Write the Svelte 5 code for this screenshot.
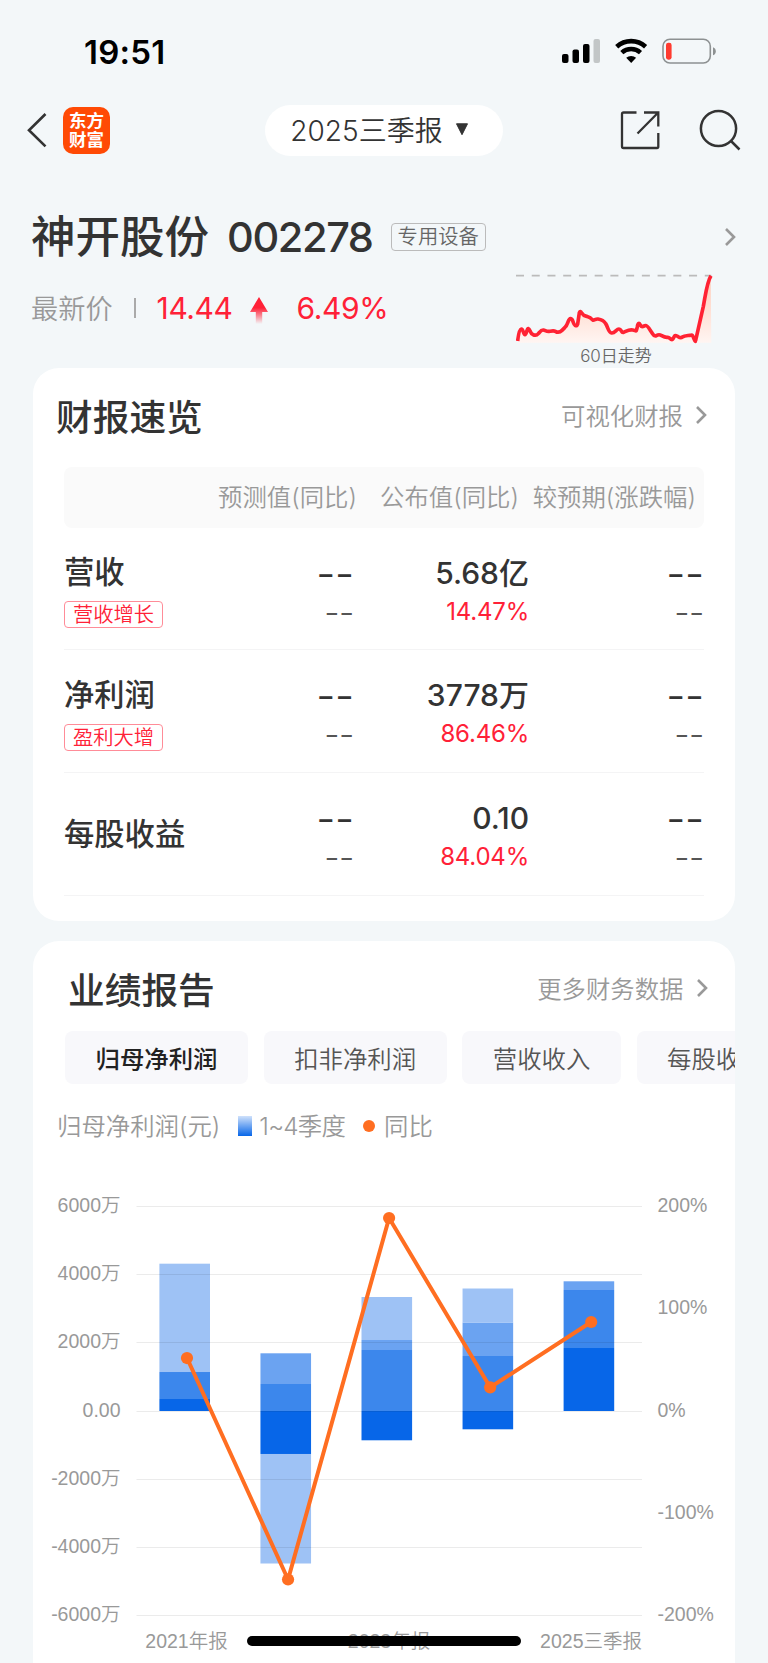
<script>
	const metrics = [
		{ name: '营收', tag: '营收增长', value: '5.68亿', change: '14.47%' },
		{ name: '净利润', tag: '盈利大增', value: '3778万', change: '86.46%' },
		{ name: '每股收益', tag: '', value: '0.10', change: '84.04%' }
	];

	const tabs = ['归母净利润', '扣非净利润', '营收收入', '每股收益'];
	let activeTab = $state(0);

	// Stacked quarters, from/to in 万元
	const colors = ['#0766e8', '#3c87ec', '#6ba3f1', '#9ec2f5'];
	const bars = [
		[[0, 351, 0], [351, 1142, 1], [1142, 4315, 3]],
		[[0, 791, 1], [791, 1690, 2], [-1259, 0, 0], [-4467, -1259, 3]],
		[[0, 1787, 1], [1787, 2080, 2], [2080, 3339, 3], [-858, 0, 0]],
		[[0, 1611, 1], [1611, 2592, 2], [2592, 3588, 3], [-536, 0, 0]],
		[[0, 1845, 0], [1845, 3544, 1], [3544, 3799, 2]]
	];
	const growth = [51.7, -164.5, 188.4, 23.1, 86.9];

	const leftTicks = [6000, 4000, 2000, 0, -2000, -4000, -6000];
	const rightTicks = [200, 100, 0, -100, -200];

	const barWidth = 50.6;
	const barX = (i) => 126.4 + i * 101.05;
	const valueY = (v) => 261 - v * 0.03414;
	const percentY = (p) => 261 - p * 1.0243;
	const pointX = (i) => 154 + i * 101.05;

	const linePoints = growth.map((p, i) => `${pointX(i)},${percentY(p)}`).join(' ');
</script>

{#snippet chevron()}
	<svg class="chevron" width="12" height="20" viewBox="0 0 12 20">
		<path d="M2 2l8 8-8 8" />
	</svg>
{/snippet}

<div class="page">
	<div class="status-bar">
		<span class="time">19:51</span>
		<svg class="status-icons" width="156" height="28" viewBox="0 0 156 28">
			<rect x="1" y="16" width="6.5" height="9" rx="2" />
			<rect x="11.5" y="11.5" width="6.5" height="13.5" rx="2" />
			<rect x="22" y="6" width="6.5" height="19" rx="2" />
			<rect x="32.5" y="1" width="6.5" height="24" rx="2" fill="#c2c6c7" />
			<g fill="none" stroke="#000" stroke-width="4.6">
				<path d="M55.7 8.7a21.5 21.5 0 0 1 28.9 0" />
				<path d="M60.8 14.6a14 14 0 0 1 18.7 0" />
			</g>
			<path d="M65.2 19.8a7.5 7.5 0 0 1 9.9 0l-4.9 5.2z" />
			<rect x="102" y="1.2" width="47.3" height="23.8" rx="7" fill="none" stroke="#8d9192" stroke-width="1.6" />
			<rect x="105" y="4.7" width="5.6" height="17" rx="2.4" fill="#ff3b30" />
			<path d="M152 9.2q2.8 1 2.8 4t-2.8 4z" fill="#8d9192" />
		</svg>
	</div>

	<header>
		<div class="nav-left">
			<svg width="24" height="40" viewBox="0 0 24 40">
				<path d="M20.5 4L4 20.2l16.5 16.2" fill="none" stroke="#333" stroke-width="2.6" />
			</svg>
			<div class="logo"><span>东方</span><span>财富</span></div>
		</div>

		<button class="period">
			<span>2025三季报</span>
			<svg width="14" height="13" viewBox="0 0 14 13">
				<path d="M1.5.8h11L7 11.7z" fill="#333" stroke="#333" stroke-linejoin="round" />
			</svg>
		</button>

		<div class="nav-right">
			<svg width="40" height="40" viewBox="0 0 40 40">
				<g fill="none" stroke="#333" stroke-width="2.3">
					<path d="M16.5 2.500H3.500Q2 2.500 2 4V36.500Q2 38 3.500 38H37Q38.300 38 38.300 36.500V23" />
					<path d="M24 2.500h14.300v14M38 2.800L17.500 23.500" />
				</g>
			</svg>
			<svg width="44" height="44" viewBox="0 0 44 44">
				<g fill="none" stroke="#333" stroke-width="2.5">
					<circle cx="20.500" cy="20.500" r="17.600" />
					<path d="M33 33l8.500 8.500" />
				</g>
			</svg>
		</div>
	</header>

	<section class="stock">
		<div class="stock-title">
			<h1>神开股份</h1>
			<span class="code">002278</span>
			<span class="industry">专用设备</span>
			{@render chevron()}
		</div>
		<div class="quote">
			<span class="quote-label">最新价</span>
			<span class="bar"></span>
			<span class="price">14.44</span>
			<svg class="up" width="18" height="28" viewBox="0 0 18 28">
				<defs>
					<linearGradient id="up" x1="0" y1="0" x2="0" y2="1">
						<stop offset="0.4" stop-color="#ff2137" />
						<stop offset="1" stop-color="#ff2137" stop-opacity="0" />
					</linearGradient>
				</defs>
				<path d="M9 0l9 15h-5.800v12H5.800V15H0z" fill="url(#up)" />
			</svg>
			<span class="percent">6.49%</span>
			<div class="trend">
				<svg width="200" height="75" viewBox="0 0 600 225">
					<defs>
						<linearGradient id="area" x1="0" y1="0" x2="0" y2="1">
							<stop offset="0" stop-color="#ffc9b5" />
							<stop offset="1" stop-color="#fff5f2" />
						</linearGradient>
					</defs>
					<path
						d="M5 212L10 185 17 177 27 192 37 175 50 192 60 195 79 178 99 185 109 181 129 187 147 174 164 147 183 166 193 125 202 137 224 143 233 152 242 147 265 157 286 190 309 176 324 187 340 178 360 182 369 160 380 170 394 167 418 197 432 194 470 206 480 198 497 202 525 195 538 210 584 18 586 218H5z"
						fill="url(#area)"
					/>
					<path d="M0 17h586" stroke="#bbb" stroke-width="5" stroke-dasharray="24 23.2" />
					<path
						d="M5 213C7 195 10 178 16 177S22 194 27 194 32 175 37 176C42 178 43 190 50 193Q60 199 67 191C73 184 76 179 82 180S92 186 101 184 113 181 118 184 129 190 138 181L147 172C156 166 156 145 164 146S171 163 177 166 183 167 185 162L190 128Q193 121 197 129 202 137 212 139 224 142 230 150C235 152 238 146 246 147Q262 149 269 161C276 171 277 188 287 189S301 177 309 177 315 190 323 187 338 178 350 180 360 188 364 170C366 158 370 158 373 165S380 170 387 167 402 180 407 187 414 201 421 197 430 193 437 197 448 203 455 202 466 214 471 206 476 194 483 198 493 206 499 201 515 197 522 196 529 193 534 207 538 213 541 202L562 109C569 71 573 35 585 17"
						fill="none"
						stroke="#ff2233"
						stroke-width="11"
						stroke-linejoin="round"
					/>
				</svg>
				<span>60日走势</span>
			</div>
		</div>
	</section>

	<section class="card overview">
		<div class="card-head">
			<h2>财报速览</h2>
			<a href="#visual">可视化财报 {@render chevron()}</a>
		</div>
		<div class="table">
			<div class="row table-head">
				<span></span>
				<span>预测值(同比)</span>
				<span>公布值(同比)</span>
				<span>较预期(涨跌幅)</span>
			</div>
			{#each metrics as metric}
				<div class="row">
					<div class="metric">
						<strong>{metric.name}</strong>
						{#if metric.tag}
							<span class="tag">{metric.tag}</span>
						{/if}
					</div>
					<div class="cell empty"><b>--</b><span>--</span></div>
					<div class="cell"><b>{metric.value}</b><span class="red">{metric.change}</span></div>
					<div class="cell empty"><b>--</b><span>--</span></div>
				</div>
			{/each}
		</div>
	</section>

	<section class="card report">
		<div class="card-head">
			<h2>业绩报告</h2>
			<a href="#more">更多财务数据 {@render chevron()}</a>
		</div>
		<div class="tabs">
			{#each tabs as tab, i}
				<button class:active={activeTab === i} onclick={() => (activeTab = i)}>{tab}</button>
			{/each}
		</div>
		<div class="legend">
			<span>归母净利润(元)</span>
			<i class="swatch"></i>
			<span class="quarters">1~4季度</span>
			<i class="dot"></i>
			<span>同比</span>
		</div>

		<svg class="chart" width="702" height="513" viewBox="0 0 702 513">
			{#each bars as stack, i}
				{#each stack as [from, to, color]}
					<rect
						x={barX(i)}
						y={valueY(to)}
						width={barWidth}
						height={valueY(from) - valueY(to)}
						fill={colors[color]}
					/>
				{/each}
			{/each}
			{#each leftTicks as tick}
				<path class="grid" d="M103.500 {Math.floor(valueY(tick)) + 0.5}H609" />
				<text x="87.500" y={valueY(tick) + 5.5} text-anchor="end">{tick ? `${tick}万` : '0.00'}</text>
			{/each}
			{#each rightTicks as tick}
				<text x="624.500" y={percentY(tick) + 5.5}>{tick}%</text>
			{/each}
			<text x="153.500" y="498" text-anchor="middle">2021年报</text>
			<text x="356" y="498" text-anchor="middle">2023年报</text>
			<text x="609" y="498" text-anchor="end">2025三季报</text>
			<polyline points={linePoints} />
			{#each growth as p, i}
				<circle cx={pointX(i)} cy={percentY(p)} r="6.100" />
			{/each}
		</svg>
	</section>

	<div class="home-indicator"></div>
</div>

<style>
	:global(body) {
		background: #f3f7f9;
	}

	.page {
		position: relative;
		width: 768px;
		height: 1663px;
		overflow: hidden;
		box-sizing: border-box;
		background: #f3f7f9;
		color: #333;
		font-family: Inter, 'Noto Sans CJK SC', sans-serif;
		font-weight: 350;
	}

	.page :global(svg) {
		display: block;
		flex: none;
	}

	h1,
	h2 {
		margin: 0;
		font-weight: 500;
	}

	button {
		border: 0;
		padding: 0;
		font: inherit;
		color: inherit;
	}

	.status-bar {
		display: flex;
		align-items: center;
		justify-content: space-between;
		height: 102px;
		padding: 0 51px 0 84px;
		box-sizing: border-box;
	}

	.time {
		padding-top: 1px;
		font-size: 33px;
		font-weight: 600;
		letter-spacing: 0.2px;
		color: #000;
	}

	.status-icons {
		margin-top: 1px;
	}

	/* Top navigation */
	header {
		display: grid;
		grid-template-columns: 1fr auto 1fr;
		align-items: center;
		height: 56px;
		padding: 0 26px 0 25px;
	}

	.nav-left {
		display: flex;
		align-items: center;
		gap: 14px;
	}

	.logo {
		display: flex;
		flex-direction: column;
		justify-content: center;
		align-items: center;
		width: 47px;
		height: 47px;
		border-radius: 10px;
		background: #ff4a05;
		color: #fff;
		font-size: 17.5px;
		font-weight: 700;
		line-height: 19.5px;
	}

	.period {
		display: flex;
		align-items: center;
		justify-content: center;
		gap: 12px;
		width: 238px;
		height: 51px;
		padding: 0 8px 2px 0;
		border-radius: 26px;
		background: #fff;
		font-size: 28px;
	}

	.nav-right {
		display: flex;
		align-items: center;
		justify-content: flex-end;
		gap: 38px;
	}

	/* Stock summary */
	.stock {
		height: 210px;
		padding: 0 32px 0 31px;
		box-sizing: border-box;
	}

	.stock-title {
		display: flex;
		align-items: center;
		height: 66px;
		padding-top: 46px;
	}

	.stock-title h1 {
		font-size: 44.5px;
		line-height: 60px;
	}

	.code {
		margin-left: 18px;
		font-size: 41.5px;
		font-weight: 450;
		letter-spacing: -1.4px;
	}

	.industry {
		margin-left: 18px;
		padding: 0 6px;
		border: 1px solid #bbb;
		border-radius: 4px;
		font-size: 20.3px;
		line-height: 26px;
		color: #666;
	}

	.stock-title :global(.chevron) {
		margin-left: auto;
	}

	.chevron path {
		fill: none;
		stroke: #999;
		stroke-width: 2.6;
	}

	.quote {
		display: flex;
		align-items: flex-start;
		height: 98px;
	}

	.quote > span,
	.up {
		margin-top: 19px;
	}

	.quote-label {
		font-size: 27.2px;
		line-height: 42px;
		color: #999;
	}

	.quote .bar {
		width: 2px;
		height: 20px;
		margin: 28px 21px 0 21px;
		background: #aaa;
	}

	.price,
	.percent {
		font-size: 30px;
		font-weight: 400;
		line-height: 39px;
		letter-spacing: -0.4px;
		color: #ff2137;
	}

	.up {
		margin: 27px 29px 0 17px;
	}

	.trend {
		display: flex;
		flex-direction: column;
		align-items: center;
		width: 200px;
		margin: 0 20px 0 auto;
		font-size: 17px;
		line-height: 22px;
		color: #666;
	}

	/* Cards */
	.card {
		width: 702px;
		margin: 0 auto;
		box-sizing: border-box;
		overflow: hidden;
		background: #fff;
		border-radius: 26px;
	}

	.card-head {
		display: flex;
		align-items: center;
		justify-content: space-between;
		padding: 0 28px 6px 23px;
		height: 99px;
		box-sizing: border-box;
	}

	.card-head h2 {
		font-size: 36.7px;
	}

	.card-head a {
		display: flex;
		align-items: center;
		gap: 12px;
		font-size: 24.4px;
		color: #999;
		text-decoration: none;
	}

	.overview {
		height: 553px;
	}

	.table {
		margin: 0 31px;
	}

	.row {
		display: grid;
		grid-template-columns: 120px 170px 175px 1fr;
		height: 122.8px;
		box-sizing: border-box;
		border-bottom: 1.5px solid #f4f4f5;
	}

	.table-head {
		grid-template-columns: 120px 173px 162px 1fr;
		align-items: center;
		height: 60.5px;
		padding: 0 8px 3px 0;
		border: 0;
		border-radius: 8px;
		background: #fafafa;
		font-size: 24.4px;
		color: #999;
		text-align: right;
		white-space: nowrap;
	}

	.metric {
		display: flex;
		flex-direction: column;
		justify-content: center;
		align-items: flex-start;
		gap: 6px;
		white-space: nowrap;
	}

	.metric strong {
		font-size: 30.3px;
		font-weight: 500;
		line-height: 46px;
	}

	.tag {
		padding: 0 8px;
		border: 1px solid #ff8c98;
		border-radius: 4px;
		font-size: 20.3px;
		line-height: 25px;
		color: #ff2137;
	}

	.cell {
		display: flex;
		flex-direction: column;
		align-items: flex-end;
		padding-top: 24px;
	}

	.cell b {
		font-size: 30px;
		font-weight: 500;
		line-height: 42px;
	}

	.cell span {
		font-size: 24px;
		font-weight: 400;
		line-height: 36px;
	}

	.cell .red {
		letter-spacing: -0.2px;
		color: #ff2137;
	}

	/* Long dashes for missing values */
	.empty {
		padding-top: 25px;
	}

	.empty b,
	.empty span {
		transform: scaleX(1.34);
		transform-origin: right;
	}

	.empty span {
		color: #555;
	}

	.report {
		height: 722px;
		margin-top: 20px;
		border-radius: 26px 26px 0 0;
	}

	.report .card-head {
		height: 90px;
		padding: 3px 27.500px 0 35px;
	}

	.tabs {
		display: flex;
		gap: 15.700px;
		padding-left: 32px;
	}

	.tabs button {
		flex: none;
		height: 53px;
		padding: 0 30.500px 1px;
		border-radius: 8px;
		background: #f8f8fb;
		font-size: 24.4px;
		color: #555;
	}

	.tabs .active {
		font-weight: 500;
		color: #222;
	}

	.legend {
		display: flex;
		align-items: center;
		height: 66px;
		padding: 17px 0 0 24px;
		box-sizing: border-box;
		font-size: 24.4px;
		line-height: 36px;
		color: #999;
	}

	.swatch {
		width: 14px;
		height: 20px;
		margin: 0 7px 0 18px;
		background: linear-gradient(#cfe1fb, #0766e8);
	}

	.quarters {
		letter-spacing: -0.8px;
	}

	.dot {
		width: 12px;
		height: 12px;
		margin: 0 9px 0 18px;
		border-radius: 50%;
		background: #ff6e21;
	}

	.chart text {
		font-family: 'Liberation Sans', 'Noto Sans CJK SC', sans-serif;
		font-size: 19.5px;
		fill: #999;
	}

	.grid {
		stroke: rgba(0, 0, 0, 0.08);
	}

	.chart polyline {
		fill: none;
		stroke: #ff6e21;
		stroke-width: 4;
		stroke-linejoin: round;
	}

	.chart circle {
		fill: #ff6e21;
	}

	.home-indicator {
		position: absolute;
		left: 247px;
		bottom: 17px;
		width: 274px;
		height: 10px;
		border-radius: 5px;
		background: #000;
	}
</style>
